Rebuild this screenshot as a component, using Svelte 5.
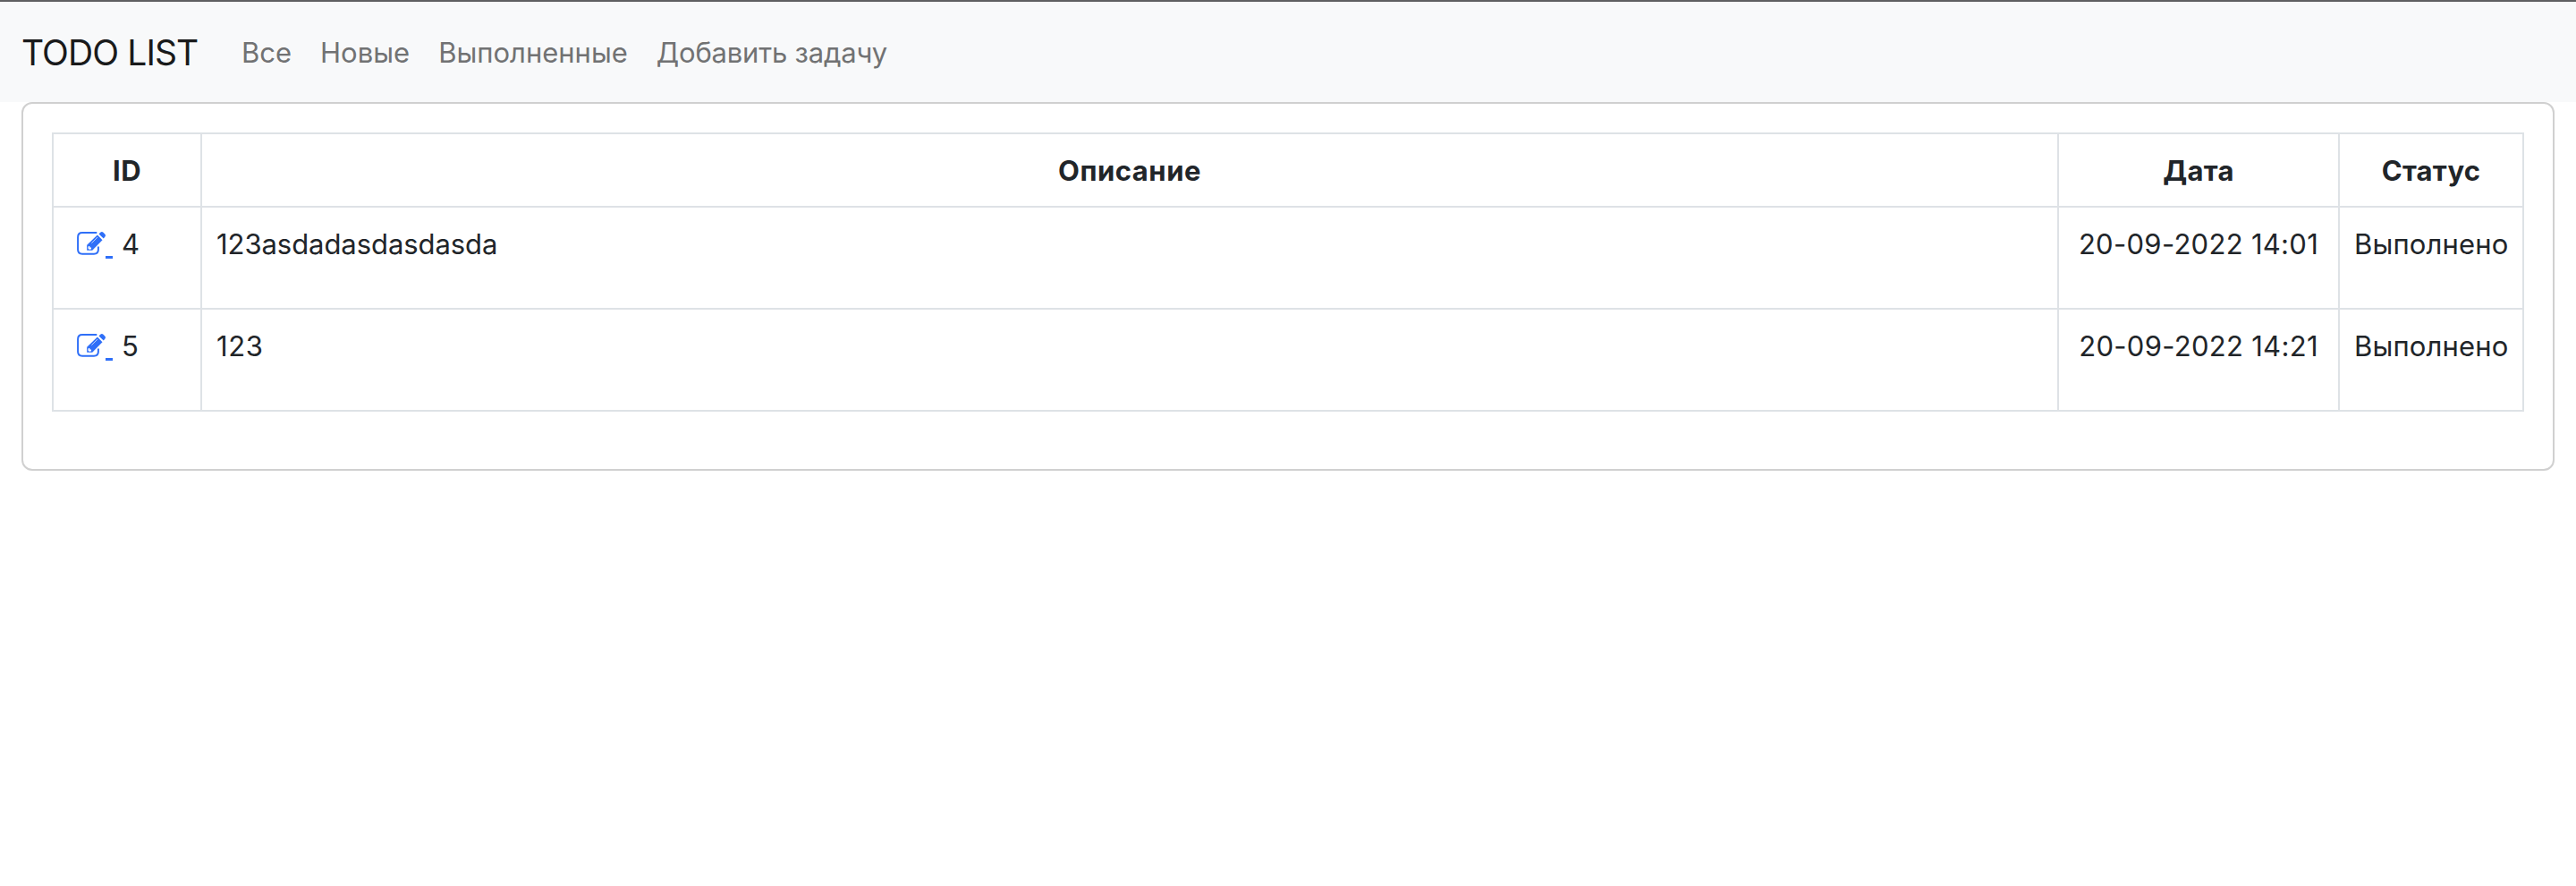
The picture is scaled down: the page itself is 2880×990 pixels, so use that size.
<script>
  const links = ['Все', 'Новые', 'Выполненные', 'Добавить задачу'];
  const tasks = [
    { id: 4, text: '123asdadasdasdasda', date: '20-09-2022 14:01', status: 'Выполнено' },
    { id: 5, text: '123', date: '20-09-2022 14:21', status: 'Выполнено' }
  ];
</script>

<nav>
  <span class="brand">TODO LIST</span>
  <div class="links">
    {#each links as label}
      <span class="link" class:long={label.length > 12}>{label}</span>
    {/each}
  </div>
</nav>
<main>
  <table>
    <colgroup><col class="c-id" /><col /><col class="c-date" /><col class="c-status" /></colgroup>
    <thead>
      <tr><th class="wide">ID</th><th class="wide">Описание</th><th>Дата</th><th>Статус</th></tr>
    </thead>
    <tbody>
      {#each tasks as task}
        <tr>
          <td>
            <div class="id">
              <span class="edit">
                <svg viewBox="0 0 32 32" width="32" height="32">
                  <path d="M22.3 4H6Q1.1 4 1.1 8.9v14.2q0 4.7 4.9 4.7h13q4.9 0 4.9-4.7v-3.6" fill="none" stroke="currentColor" stroke-width="2" />
                  <path d="M22.9 6.6l5.6 5.6-11.3 11.6h-6v-6z" fill="currentColor" />
                  <path d="M24.5 5.5l1.7-1.7q1.7-1.5 3.3 0l1.7 1.7q1.5 1.6 0 3.3l-1.4 1.6z" fill="currentColor" />
                  <path d="M16.4 15.7l6.6-6.6" stroke="#fff" stroke-width=".7" fill="none" />
                  <path d="M13 18.9h1.3v1.6h1.7v1.4l-.9.8h-1.3l-1.5-1.5z" fill="#fff" />
                </svg>
                <span class="underline"></span>
              </span>
              <span>{task.id}</span>
            </div>
          </td>
          <td class="text" class:digits={task.text.length < 4}>{task.text}</td>
          <td class="date">{task.date}</td>
          <td class="status">{task.status}</td>
        </tr>
      {/each}
    </tbody>
  </table>
</main>

<style>
  :global(body) {
    font: 31px/50px Inter, sans-serif;
    color: #212529;
    background: #fff;
  }
  nav {
    box-sizing: border-box;
    height: 114px;
    border-top: 2px solid #5f5f61;
    background: #f8f9fa;
    display: flex;
    align-items: center;
    padding: 2px 24px 0;
  }
  .brand {
    box-sizing: border-box;
    width: 246px;
    font-size: 39px;
    letter-spacing: -0.9px;
    color: #191a1b;
    white-space: nowrap;
  }
  .links {
    display: flex;
    gap: 32px;
    color: #717273;
  }
  .link {
    white-space: nowrap;
  }
  .long {
    letter-spacing: -0.2px;
  }
  main {
    margin: 0 24px;
    border: 2px solid #d0d0d0;
    border-radius: 12px;
    padding: 32px 32px 64px;
  }
  table {
    width: 100%;
    table-layout: fixed;
    border-collapse: collapse;
  }
  th,
  td {
    border: 2px solid #dee2e6;
    padding: 16px 16px 14px;
    white-space: nowrap;
    text-align: left;
  }
  th {
    text-align: center;
    letter-spacing: 0.25px;
  }
  .wide {
    letter-spacing: 0.5px;
  }
  td {
    padding-bottom: 46px;
  }
  .c-id {
    width: 166px;
  }
  .c-date {
    width: 314px;
  }
  .c-status {
    width: 206px;
  }
  .id {
    display: flex;
    padding-left: 10px;
    gap: 10px;
  }
  .edit {
    display: flex;
    align-items: flex-start;
    color: #2f6ff8;
  }
  svg {
    display: block;
    margin-top: 8px;
  }
  .underline {
    width: 8px;
    height: 3px;
    margin-top: 38px;
    background: currentColor;
  }
  .text {
    letter-spacing: -0.06px;
  }
  .date {
    text-align: center;
    letter-spacing: 0.3px;
  }
  .status {
    letter-spacing: 0.15px;
  }
  .digits {
    letter-spacing: 0.6px;
  }
</style>
